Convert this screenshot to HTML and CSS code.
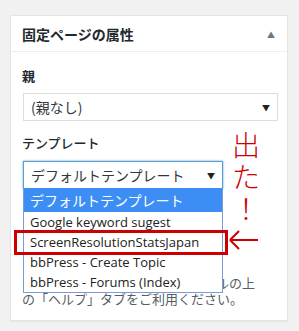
FILE: index.html
```html
<!DOCTYPE html>
<html lang="ja">
<head>
    <meta charset="UTF-8">
    <title>固定ページの属性</title>
    <link rel="stylesheet" href="styles.css">
</head>
<body>

    <!-- Page attributes box -->
    <div class="postbox">
        <div class="postbox-header">
            <h2>固定ページの属性</h2>
            <span class="toggle">▲</span>
        </div>
        <div class="inside">
            <p class="attr-label">親</p>
            <div class="fake-select wide">
                <span>(親なし)</span>
                <span class="caret">▼</span>
            </div>

            <p class="attr-label second">テンプレート</p>
            <div class="select-wrap">
                <div class="fake-select narrow focused">
                    <span>デフォルトテンプレート</span>
                    <span class="caret">▼</span>
                </div>
                <ul class="dropdown">
                    <li class="selected">デフォルトテンプレート</li>
                    <li>Google keyword sugest</li>
                    <li>ScreenResolutionStatsJapan</li>
                    <li>bbPress - Create Topic</li>
                    <li>bbPress - Forums (Index)</li>
                </ul>
                <div class="mark-box"></div>
            </div>

            <p class="help">ヘルプが必要ですか ? 画面タイトルの上の「ヘルプ」タブをご利用ください。</p>
        </div>

        <!-- annotation -->
        <div class="note">
            <span>出</span>
            <span>た</span>
            <span class="bang">！</span>
        </div>
        <svg class="arrow" width="34" height="24" viewBox="0 0 34 24">
            <path d="M4 12 H32 M4 12 L13 3 M4 12 L13 21" fill="none" stroke="#cc0000" stroke-width="2"/>
        </svg>
    </div>

</body>
</html>
```

FILE: styles.css
```css
body {
    margin: 0;
    padding: 15px 10px 10px 10px;
    background: #f1f1f1;
    font-family: "Open Sans", "Noto Sans CJK JP", sans-serif;
    color: #23282d;
}
.postbox {
    position: relative;
    width: 276px;
    height: 304px;
    background: white;
    border: 1px solid #e5e5e5;
    box-shadow: 0 1px 1px rgba(0, 0, 0, 0.04);
}
.postbox-header {
    display: flex;
    justify-content: space-between;
    align-items: center;
    height: 35px;
    padding: 0 12px 0 11px;
    border-bottom: 1px solid #eee;
}
.postbox-header h2 {
    margin: 0;
    font-size: 14px;
    font-weight: 600;
    font-family: "Noto Sans CJK JP", sans-serif;
    color: #23282d;
}
.toggle {
    font-size: 8px;
    color: #72777c;
    margin-top: 2px;
}
.inside {
    padding: 0 10px 0 11px;
}
.attr-label {
    margin: 14px 0 0 0;
    font-size: 13px;
    line-height: 20px;
    font-weight: 600;
    font-family: "Noto Sans CJK JP", sans-serif;
    color: #23282d;
}
.attr-label.second {
    margin-top: 12px;
    font-weight: 500;
}
.fake-select {
    display: flex;
    justify-content: space-between;
    align-items: center;
    box-sizing: border-box;
    height: 28px;
    margin: 7px 0 0 1px;
    padding: 0 7px 0 7px;
    border: 1px solid #ddd;
    font-size: 14px;
    font-family: "Noto Sans CJK JP", sans-serif;
    color: #32373c;
    background: white;
}
.wide { width: 255px; }
.narrow { width: 200px; }
.focused {
    border-color: #5b9dd9;
    box-shadow: 0 0 2px rgba(30, 140, 190, 0.8);
}
.caret {
    font-size: 8px;
    color: #222;
}
.select-wrap {
    position: relative;
    padding-top: 1px;
}
.dropdown {
    position: absolute;
    top: 35px;
    left: 1px;
    width: 200px;
    box-sizing: border-box;
    margin: 0;
    padding: 0;
    list-style: none;
    background: white;
    border: 1px solid #7a9cd3;
    border-top: none;
    font-size: 13px;
    color: #222;
    z-index: 2;
}
.dropdown li {
    height: 20px;
    line-height: 20px;
    padding-left: 6px;
    white-space: nowrap;
}
.dropdown li.selected {
    height: 24px;
    line-height: 24px;
    font-size: 14px;
    background: #3d8ef4;
    color: white;
    font-family: "Noto Sans CJK JP", sans-serif;
}
.mark-box {
    position: absolute;
    top: 77px;
    left: -8px;
    width: 208px;
    height: 19px;
    border: 3px solid #cc0000;
    z-index: 3;
}
.help {
    width: 244px;
    margin: 86px 0 0 0;
    font-size: 13px;
    line-height: 16px;
    color: #555d66;
    font-family: "Noto Sans CJK JP", sans-serif;
}
.note {
    position: absolute;
    top: 112px;
    left: 221px;
    display: flex;
    flex-direction: column;
    align-items: center;
    width: 28px;
    font-family: "Noto Sans CJK JP", sans-serif;
    font-weight: 300;
    font-size: 28px;
    line-height: 32px;
    color: #cc0000;
}
.arrow {
    position: absolute;
    top: 212px;
    left: 215px;
}
```
